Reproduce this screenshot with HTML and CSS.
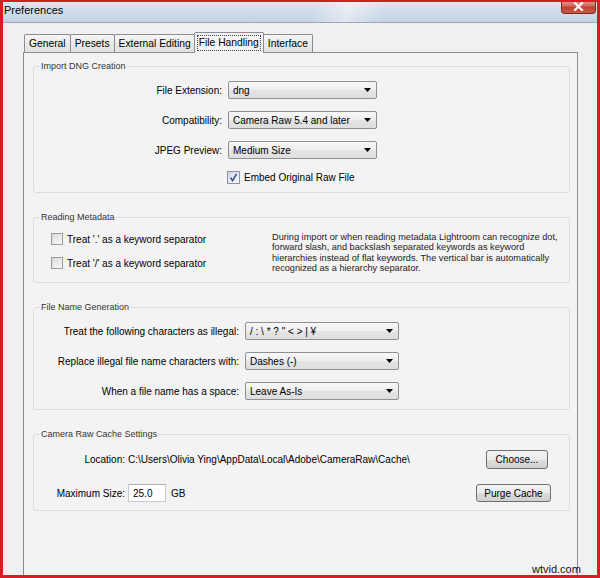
FILE: index.html
```html
<!DOCTYPE html>
<html lang="en">

<head>
    <meta charset="UTF-8">
    <title>Preferences</title>
    <link rel="stylesheet" href="styles.css">
</head>

<body>
    <div class="window">
        <div class="titlebar">
            <span class="title">Preferences</span>
            <span class="close-btn">
                <svg width="11" height="9" viewBox="0 0 11 9">
                    <path d="M2 1 L9 8 M9 1 L2 8" stroke="#fff" stroke-width="2.2" stroke-linecap="square" />
                </svg>
            </span>
        </div>

        <div class="content">
            <div class="tabs">
                <div class="tab">General</div>
                <div class="tab">Presets</div>
                <div class="tab">External Editing</div>
                <div class="tab active"><span class="focus">File Handling</span></div>
                <div class="tab">Interface</div>
            </div>

            <div class="panel">
                <!-- Import DNG Creation -->
                <fieldset class="group">
                    <legend>Import DNG Creation</legend>
                    <div class="form-grid dng-grid">
                        <label>File Extension:</label>
                        <div class="combo"><span>dng</span><svg class="arrow" width="7" height="4" viewBox="0 0 7 4"><path d="M0 0 H7 L3.5 4 Z" fill="#000" /></svg></div>

                        <label>Compatibility:</label>
                        <div class="combo"><span>Camera Raw 5.4 and later</span><svg class="arrow" width="7" height="4" viewBox="0 0 7 4"><path d="M0 0 H7 L3.5 4 Z" fill="#000" /></svg></div>

                        <label>JPEG Preview:</label>
                        <div class="combo"><span>Medium Size</span><svg class="arrow" width="7" height="4" viewBox="0 0 7 4"><path d="M0 0 H7 L3.5 4 Z" fill="#000" /></svg></div>

                        <div class="check-row col-2">
                            <span class="checkbox checked">
                                <svg width="11" height="11" viewBox="0 0 11 11"><path d="M2.6 5.6 L4.6 8.6 L8.6 1.8" fill="none" stroke="#2f4f86" stroke-width="1.5" /></svg>
                            </span>
                            <span>Embed Original Raw File</span>
                        </div>
                    </div>
                </fieldset>

                <!-- Reading Metadata -->
                <fieldset class="group">
                    <legend>Reading Metadata</legend>
                    <div class="metadata">
                        <div class="metadata-checks">
                            <div class="check-row">
                                <span class="checkbox"></span>
                                <span>Treat '.' as a keyword separator</span>
                            </div>
                            <div class="check-row">
                                <span class="checkbox"></span>
                                <span>Treat '/' as a keyword separator</span>
                            </div>
                        </div>
                        <p class="note">
                            During import or when reading metadata Lightroom can recognize dot,<br>
                            forward slash, and backslash separated keywords as keyword<br>
                            hierarchies instead of flat keywords. The vertical bar is automatically<br>
                            recognized as a hierarchy separator.
                        </p>
                    </div>
                </fieldset>

                <!-- File Name Generation -->
                <fieldset class="group">
                    <legend>File Name Generation</legend>
                    <div class="form-grid naming-grid">
                        <label>Treat the following characters as illegal:</label>
                        <div class="combo"><span>/ : \ * ? &quot; &lt; &gt; | &yen;</span><svg class="arrow" width="7" height="4" viewBox="0 0 7 4"><path d="M0 0 H7 L3.5 4 Z" fill="#000" /></svg></div>

                        <label>Replace illegal file name characters with:</label>
                        <div class="combo"><span>Dashes (-)</span><svg class="arrow" width="7" height="4" viewBox="0 0 7 4"><path d="M0 0 H7 L3.5 4 Z" fill="#000" /></svg></div>

                        <label>When a file name has a space:</label>
                        <div class="combo"><span>Leave As-Is</span><svg class="arrow" width="7" height="4" viewBox="0 0 7 4"><path d="M0 0 H7 L3.5 4 Z" fill="#000" /></svg></div>
                    </div>
                </fieldset>

                <!-- Camera Raw Cache Settings -->
                <fieldset class="group cache-group">
                    <legend>Camera Raw Cache Settings</legend>
                    <div class="cache-grid">
                        <label>Location:</label>
                        <span class="path">C:\Users\Olivia Ying\AppData\Local\Adobe\CameraRaw\Cache\</span>
                        <button class="btn choose-btn">Choose...</button>

                        <label>Maximum Size:</label>
                        <span class="size-field"><span class="textbox">25.0</span><span>GB</span></span>
                        <button class="btn purge-btn">Purge Cache</button>
                    </div>
                </fieldset>
            </div>
        </div>

        <div class="watermark">wtvid.com</div>
    </div>
</body>

</html>
```

FILE: styles.css
```css
* {
    margin: 0;
    padding: 0;
    box-sizing: border-box;
}

body {
    font-family: 'Liberation Sans', Arial, sans-serif;
    font-size: 10px;
    color: #000;
    background: #fff;
}

.window {
    position: relative;
    width: 600px;
    height: 578px;
    border: 3px solid #d81c24;
    border-top-width: 2px;
    background: #f0f0f0;
    display: flex;
    flex-direction: column;
    overflow: hidden;
}

/* title bar */

.titlebar {
    height: 21px;
    display: flex;
    align-items: flex-start;
    border-bottom: 1px solid #9aaabb;
    background:
        linear-gradient(110deg, transparent 52%, rgba(255, 255, 255, 0.45) 58%, transparent 64%),
        linear-gradient(to bottom, #dce6f0 0%, #cfdce9 50%, #c5d4e3 100%);
}

.title {
    font-size: 11px;
    line-height: 17px;
    padding-left: 1px;
}

.close-btn {
    margin-left: auto;
    margin-top: -2px;
    margin-right: 1px;
    width: 35px;
    height: 14px;
    display: flex;
    align-items: center;
    justify-content: center;
    border: 1px solid #7b2a22;
    border-top: none;
    border-radius: 0 0 4px 4px;
    background: linear-gradient(to bottom, #e4a197 0%, #d36a5c 45%, #c1412f 55%, #c9594a 100%);
}

/* tabs */

.content {
    flex: 1;
    display: flex;
    flex-direction: column;
    padding: 9px 19px 0 20px;
}

.tabs {
    height: 20px;
    display: flex;
    align-items: flex-end;
    padding-left: 1px;
}

.tab {
    height: 18px;
    padding: 0 4px;
    margin-right: -1px;
    display: flex;
    align-items: center;
    font-size: 10.3px;
    border: 1px solid #898c95;
    border-bottom: none;
    border-radius: 2px 2px 0 0;
    background: linear-gradient(to bottom, #f5f5f5 0%, #ebebeb 50%, #e0e0e0 100%);
}

.tab.active {
    position: relative;
    z-index: 1;
    height: 21px;
    margin: 0 -1px -1px -1px;
    padding: 0 3px;
    background: #f3f3f3;
}

.focus {
    outline: 1px dotted #444;
    padding: 1px 1px 2px;
}

/* panel and groups */

.panel {
    flex: 1;
    border: 1px solid #898c95;
    border-bottom: none;
    background: #f3f3f3;
    padding: 7px 7px 0 9px;
}

.group {
    border: 1px solid #d5dfe5;
    border-radius: 3px;
    min-width: 0;
    margin-bottom: 18px;
}

.group legend {
    font-size: 9px;
    line-height: 12px;
    color: #333;
    margin-left: 6px;
    padding: 0 1px;
}

.cache-group {
    margin-top: 2px;
}

.form-grid {
    display: grid;
    column-gap: 6px;
    row-gap: 12px;
    align-items: center;
    padding: 9px 0 8px;
}

.form-grid label {
    text-align: right;
}

.dng-grid {
    grid-template-columns: 188px 149px;
}

.naming-grid {
    grid-template-columns: 205px 154px;
    padding-bottom: 9px;
}

.col-2 {
    grid-column: 2;
}

.combo {
    height: 18px;
    display: flex;
    align-items: center;
    justify-content: space-between;
    padding: 0 5px 0 4px;
    border: 1px solid #8f9094;
    border-radius: 2px;
    background: linear-gradient(to bottom, #f7f7f7 0%, #eeeeee 50%, #e4e4e4 51%, #dedede 100%);
    white-space: nowrap;
}

.check-row {
    display: flex;
    align-items: center;
    gap: 4px;
    height: 12px;
}

.dng-grid .check-row {
    margin-left: -1px;
    height: 13px;
}

.checkbox {
    width: 12px;
    height: 12px;
    flex-shrink: 0;
    border: 1px solid #9a9a9a;
    background: linear-gradient(135deg, #d8d8d8 0%, #f2f2f2 70%, #fbfbfb 100%);
    display: flex;
    align-items: center;
    justify-content: center;
}

.checkbox.checked {
    width: 13px;
    height: 13px;
    border-color: #8a93a5;
    background: linear-gradient(135deg, #cfd5e0 0%, #eef1f6 70%, #fafbfd 100%);
}

.metadata {
    display: flex;
    align-items: flex-start;
}

.metadata-checks {
    flex: 0 0 238px;
    display: flex;
    flex-direction: column;
    gap: 12px;
    padding: 10px 0 13px 17px;
}

.note {
    margin-top: 9px;
    font-size: 9.2px;
    line-height: 10.3px;
    color: #222;
    white-space: nowrap;
}

.cache-grid {
    display: grid;
    grid-template-columns: 91px 1fr auto;
    column-gap: 3px;
    row-gap: 15px;
    align-items: center;
    padding: 10px 18px 8px 0;
}

.cache-grid label {
    text-align: right;
}

.size-field {
    display: flex;
    align-items: center;
    gap: 5px;
}

.textbox {
    width: 38px;
    height: 18px;
    padding-left: 4px;
    display: flex;
    align-items: center;
    background: #fff;
    border: 1px solid #c5ccd6;
    border-top-color: #abadb3;
}

.btn {
    justify-self: end;
    font-family: inherit;
    font-size: 10px;
    color: #000;
    border: 1px solid #707070;
    border-radius: 3px;
    background: linear-gradient(to bottom, #f2f2f2 0%, #ebebeb 50%, #dddddd 51%, #cfcfcf 100%);
}

.choose-btn {
    width: 62px;
    height: 19px;
    margin-right: 3px;
}

.purge-btn {
    width: 75px;
    height: 18px;
}

.watermark {
    position: absolute;
    left: 529px;
    top: 561px;
    font-family: 'Liberation Sans', Arial, sans-serif;
    font-size: 11px;
    color: #111;
}
```
